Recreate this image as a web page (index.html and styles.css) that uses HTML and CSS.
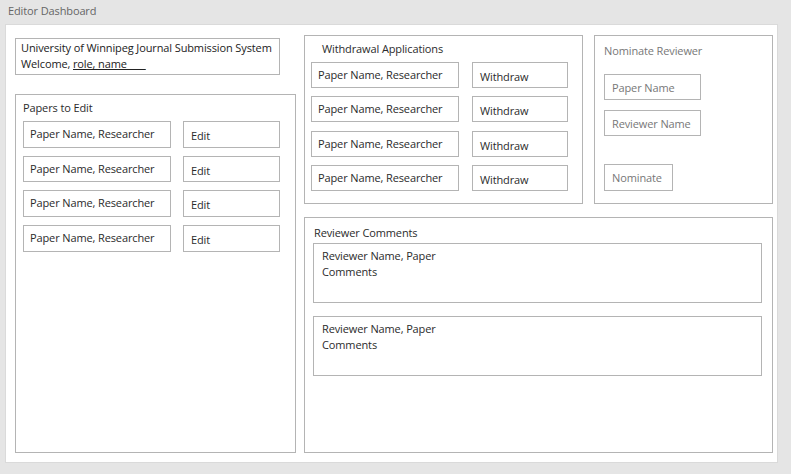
FILE: index.html
```html
<!DOCTYPE html>
<html>
<head>
<meta charset="utf-8">
<link rel="stylesheet" href="styles.css">
</head>
<body>
<div class="titlebar">Editor Dashboard</div>
<div class="panel">
  <div class="col-left">
    <div class="header-box">
      <div>University of Winnipeg Journal Submission System</div>
      <div>Welcome, <u>role, name____</u></div>
    </div>
    <div class="box papers">
      <div class="box-title">Papers to Edit</div>
      <div class="rows">
        <div class="row"><div class="field">Paper Name, Researcher</div><div class="btn">Edit</div></div>
        <div class="row"><div class="field">Paper Name, Researcher</div><div class="btn">Edit</div></div>
        <div class="row"><div class="field">Paper Name, Researcher</div><div class="btn">Edit</div></div>
        <div class="row"><div class="field">Paper Name, Researcher</div><div class="btn">Edit</div></div>
      </div>
    </div>
  </div>
  <div class="box withdrawal">
    <div class="box-title">Withdrawal Applications</div>
    <div class="rows">
      <div class="row"><div class="field">Paper Name, Researcher</div><div class="btn">Withdraw</div></div>
      <div class="row"><div class="field">Paper Name, Researcher</div><div class="btn">Withdraw</div></div>
      <div class="row"><div class="field">Paper Name, Researcher</div><div class="btn">Withdraw</div></div>
      <div class="row"><div class="field">Paper Name, Researcher</div><div class="btn">Withdraw</div></div>
    </div>
  </div>
  <div class="box nominate">
    <div class="box-title">Nominate Reviewer</div>
    <div class="input">Paper Name</div>
    <div class="input second">Reviewer Name</div>
    <div class="input nominate-btn">Nominate</div>
  </div>
  <div class="box comments">
    <div class="box-title">Reviewer Comments</div>
    <div class="comment">
      <div>Reviewer Name, Paper</div>
      <div>Comments</div>
    </div>
    <div class="comment">
      <div>Reviewer Name, Paper</div>
      <div>Comments</div>
    </div>
  </div>
</div>
</body>
</html>
```

FILE: styles.css
```css
* { box-sizing: border-box; }
html, body {
  margin: 0;
  padding: 0;
  background: #e5e5e5;
  width: 791px;
  height: 474px;
  overflow: hidden;
  font-family: "Open Sans", "Noto Sans", sans-serif;
  font-size: 11px;
  letter-spacing: -0.12px;
  color: #2b2b2b;
}
.titlebar {
  height: 24px;
  padding: 3px 0 0 8px;
  color: #666;
  font-size: 11px;
}
.panel {
  margin-left: 5px;
  width: 773px;
  height: 439px;
  background: #fff;
  border: 1px solid #dadada;
  padding: 10px 4px 9px 9px;
  display: grid;
  grid-template-columns: 281px 287px 190px;
  grid-template-rows: 169px 236px;
  row-gap: 13px;
}
.col-left {
  grid-column: 1;
  grid-row: 1 / span 2;
  display: flex;
  flex-direction: column;
  padding-top: 3px;
  gap: 19px;
}
.header-box {
  width: 265px;
  height: 37px;
  border: 1px solid #b4b4b4;
  padding: 1px 0 0 5px;
  line-height: 16px;
  color: #222;
}
.box {
  border: 1px solid #b4b4b4;
}
.papers {
  flex: 1;
  padding: 5px 0 0 7px;
}
.box-title {
  line-height: 16px;
}
.papers .box-title { margin-bottom: 5px; }
.rows {
  display: flex;
  flex-direction: column;
  gap: 8px;
}
.row {
  display: flex;
  gap: 12px;
}
.field, .btn {
  height: 26.7px;
  border: 1px solid #b4b4b4;
  padding: 3px 0 0 6px;
  line-height: 18px;
}
.btn { padding-top: 5px; padding-left: 7px; }
.papers .field { width: 148px; }
.papers .btn { width: 97px; }
.withdrawal {
  grid-column: 2;
  grid-row: 1;
  margin-left: 8px;
  width: 279px;
  padding: 5px 0 0 6px;
}
.withdrawal .box-title { padding-left: 11px; margin-bottom: 5px; }
.withdrawal .rows { gap: 8.3px; }
.withdrawal .row { gap: 13px; }
.withdrawal .field { width: 148px; height: 26px; }
.withdrawal .btn { width: 96px; height: 26px; }
.nominate {
  grid-column: 3;
  grid-row: 1;
  margin-left: 11px;
  width: 179px;
  padding: 7px 0 0 9px;
  color: #777;
}
.nominate .box-title { margin-bottom: 15px; }
.input {
  width: 97px;
  height: 26px;
  border: 1px solid #b4b4b4;
  padding: 4px 0 0 7px;
  line-height: 17px;
}
.input.second { margin-top: 10px; }
.input.nominate-btn { width: 69px; height: 27px; margin-top: 28px; }
.comments {
  grid-column: 2 / span 2;
  grid-row: 2;
  margin-left: 8px;
  width: 469px;
  padding: 7px 0 0 8px;
}
.comments .box-title { margin-bottom: 2px; padding-left: 1px; }
.comment {
  width: 449px;
  height: 60px;
  border: 1px solid #b4b4b4;
  padding: 4px 0 0 8px;
  line-height: 16px;
  margin-bottom: 13px;
}
```
